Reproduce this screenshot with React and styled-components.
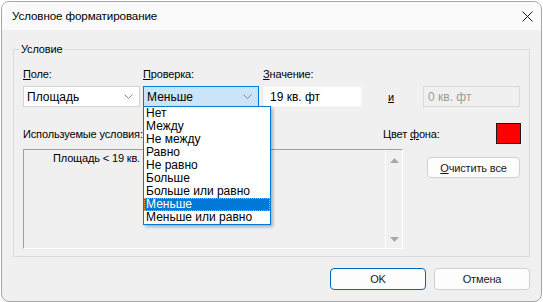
import React from 'react';
import styled, { createGlobalStyle } from 'styled-components';

const Global = createGlobalStyle`
  html, body { margin: 0; padding: 0; background: #ffffff; }
  body {
    font-family: "Liberation Sans", Arial, sans-serif;
    font-size: 11px;
    letter-spacing: -0.15px;
    color: #000;
  }
  * { box-sizing: border-box; }
`;

const Window = styled.div`
  margin: 1px 0 0 1px;
  width: 541px;
  height: 301px;
  border: 1px solid #a6a6a6;
  border-radius: 8px;
  overflow: hidden;
  background: #f0f0f0;
  display: flex;
  flex-direction: column;
`;

const TitleBar = styled.div`
  flex: none;
  height: 28px;
  display: flex;
  align-items: center;
  justify-content: space-between;
  padding: 0 8px 0 10px;
  background: #fafafa;
  line-height: 14px;
  font-size: 11.6px;
  letter-spacing: -0.1px;
`;

const Body = styled.div`
  flex: 1;
  display: flex;
  flex-direction: column;
  padding: 12px 11px 10px 11px;
`;

const Group = styled.fieldset`
  margin: 0;
  padding: 11px 9px 7px 9px;
  border: 1px solid #dadada;
  min-width: 0;
`;

const Legend = styled.legend`
  margin-left: -4px;
  padding: 0 2px;
  line-height: 14px;
`;

const FieldGrid = styled.div`
  display: grid;
  grid-template-columns: 120px 120px 125px 35px 97px;
  grid-template-rows: 14px 21px;
  row-gap: 5px;
  line-height: 14px;
`;

const Label = styled.div`
  white-space: nowrap;
`;

const Combo = styled.div`
  position: relative;
  width: ${p => p.$w}px;
  height: 21px;
  display: flex;
  align-items: center;
  justify-content: space-between;
  padding: 0 6px 0 3px;
  background: ${p => (p.$focused ? '#cce4f7' : '#ffffff')};
  border: 1px solid ${p => (p.$focused ? '#0078d7' : '#d4d4d4')};
  font-size: 12px;
  letter-spacing: 0;
`;

const TextBox = styled.div`
  width: ${p => p.$w}px;
  height: 21px;
  display: flex;
  align-items: center;
  padding-left: ${p => (p.$disabled ? 4 : 6)}px;
  background: ${p => (p.$disabled ? '#f0f0f0' : '#ffffff')};
  border: 1px solid ${p => (p.$disabled ? '#d9d9d9' : '#f4f4f4')};
  color: ${p => (p.$disabled ? '#9b9b9b' : '#000')};
  white-space: nowrap;
  font-size: 12px;
  letter-spacing: 0;
`;

const AndLabel = styled.div`
  align-self: center;
`;

const DropList = styled.div`
  position: absolute;
  top: 100%;
  left: -1px;
  width: 128px;
  z-index: 10;
  background: #ffffff;
  border: 1px solid #0078d7;
  box-shadow: 2px 2px 3px rgba(0, 0, 0, 0.28);
`;

const DropItem = styled.div`
  height: 13px;
  line-height: 13px;
  padding-left: 2px;
  white-space: nowrap;
  background: ${p => (p.$selected ? '#0078d7' : 'transparent')};
  color: ${p => (p.$selected ? '#ffffff' : '#000')};
  outline: ${p => (p.$selected ? '1px dotted #f0a040' : 'none')};
  outline-offset: -1px;
`;

const ColorRow = styled.div`
  display: grid;
  grid-template-columns: 360px 113px 25px;
  align-items: center;
  margin-top: 16px;
  height: 21px;
  line-height: 14px;
`;

const Swatch = styled.div`
  width: 25px;
  height: 21px;
  background: #ff0000;
  border: 1px solid #1a1a1a;
`;

const ListRow = styled.div`
  display: flex;
  align-items: flex-start;
  margin-top: 5px;
  gap: 24px;
`;

const ListBox = styled.div`
  width: 380px;
  height: 100px;
  display: flex;
  border-style: solid;
  border-width: 1px;
  border-color: #a0a0a0 #ffffff #ffffff #a0a0a0;
  background: #f0f0f0;
`;

const ListText = styled.div`
  flex: 1;
  padding: 1px 0 0 29px;
  line-height: 14px;
  white-space: nowrap;
`;

const ScrollBar = styled.div`
  width: 17px;
  border-left: 1px solid #ffffff;
  display: flex;
  flex-direction: column;
  justify-content: space-between;
  align-items: center;
  padding: 8px 0 6px;
`;

const Button = styled.div`
  width: ${p => p.$w}px;
  height: ${p => p.$h}px;
  display: flex;
  align-items: center;
  justify-content: center;
  background: #fdfdfd;
  border: 1px solid ${p => (p.$primary ? '#0067c0' : '#d0d0d0')};
  border-radius: 4px;
  color: #1a1a1a;
  margin-top: ${p => p.$mt || 0}px;
  white-space: nowrap;
`;

const Footer = styled.div`
  display: flex;
  justify-content: flex-end;
  gap: 8px;
  margin-top: 11px;
`;

const Chevron = () => (
  <svg width="9" height="5" viewBox="0 0 9 5">
    <path d="M0.5 0.5 L4.5 4.5 L8.5 0.5" fill="none" stroke="#7a7a7a" strokeWidth="0.9" />
  </svg>
);

const CloseIcon = () => (
  <svg width="11" height="11" viewBox="0 0 11 11">
    <path d="M0.5 0.5 L10.5 10.5 M10.5 0.5 L0.5 10.5" stroke="#1a1a1a" strokeWidth="1" />
  </svg>
);

const Arrow = ({ up }) => (
  <svg width="9" height="5" viewBox="0 0 9 5">
    <path d={up ? 'M0 5 L4.5 0 L9 5 Z' : 'M0 0 L4.5 5 L9 0 Z'} fill="#a8a8a8" />
  </svg>
);

const ops = [
  'Нет',
  'Между',
  'Не между',
  'Равно',
  'Не равно',
  'Больше',
  'Больше или равно',
  'Меньше',
  'Меньше или равно',
];

export default function App() {
  return (
    <>
      <Global />
      <Window>
        <TitleBar>
          <span>Условное форматирование</span>
          <CloseIcon />
        </TitleBar>
        <Body>
          <Group>
            <Legend>Условие</Legend>
            <FieldGrid>
              <Label><u>П</u>оле:</Label>
              <Label><u>П</u>роверка:</Label>
              <Label><u>З</u>начение:</Label>
              <div />
              <div />
              <Combo $w={117}>
                <span>Площадь</span>
                <Chevron />
              </Combo>
              <Combo $w={116} $focused>
                <span>Меньше</span>
                <Chevron />
                <DropList>
                  {ops.map(o => (
                    <DropItem key={o} $selected={o === 'Меньше'}>{o}</DropItem>
                  ))}
                </DropList>
              </Combo>
              <TextBox $w={99}>19 кв. фт</TextBox>
              <AndLabel><u>и</u></AndLabel>
              <TextBox $w={97} $disabled>0 кв. фт</TextBox>
            </FieldGrid>
            <ColorRow>
              <Label>Используемые условия:</Label>
              <Label>Цвет <u>ф</u>она:</Label>
              <Swatch />
            </ColorRow>
            <ListRow>
              <ListBox>
                <ListText>Площадь &lt; 19 кв. фт</ListText>
                <ScrollBar>
                  <Arrow up />
                  <Arrow />
                </ScrollBar>
              </ListBox>
              <Button $w={93} $h={21} $mt={8}><u>О</u>чистить все</Button>
            </ListRow>
          </Group>
          <Footer>
            <Button $w={96} $h={22} $primary>OK</Button>
            <Button $w={96} $h={22}>Отмена</Button>
          </Footer>
        </Body>
      </Window>
    </>
  );
}
